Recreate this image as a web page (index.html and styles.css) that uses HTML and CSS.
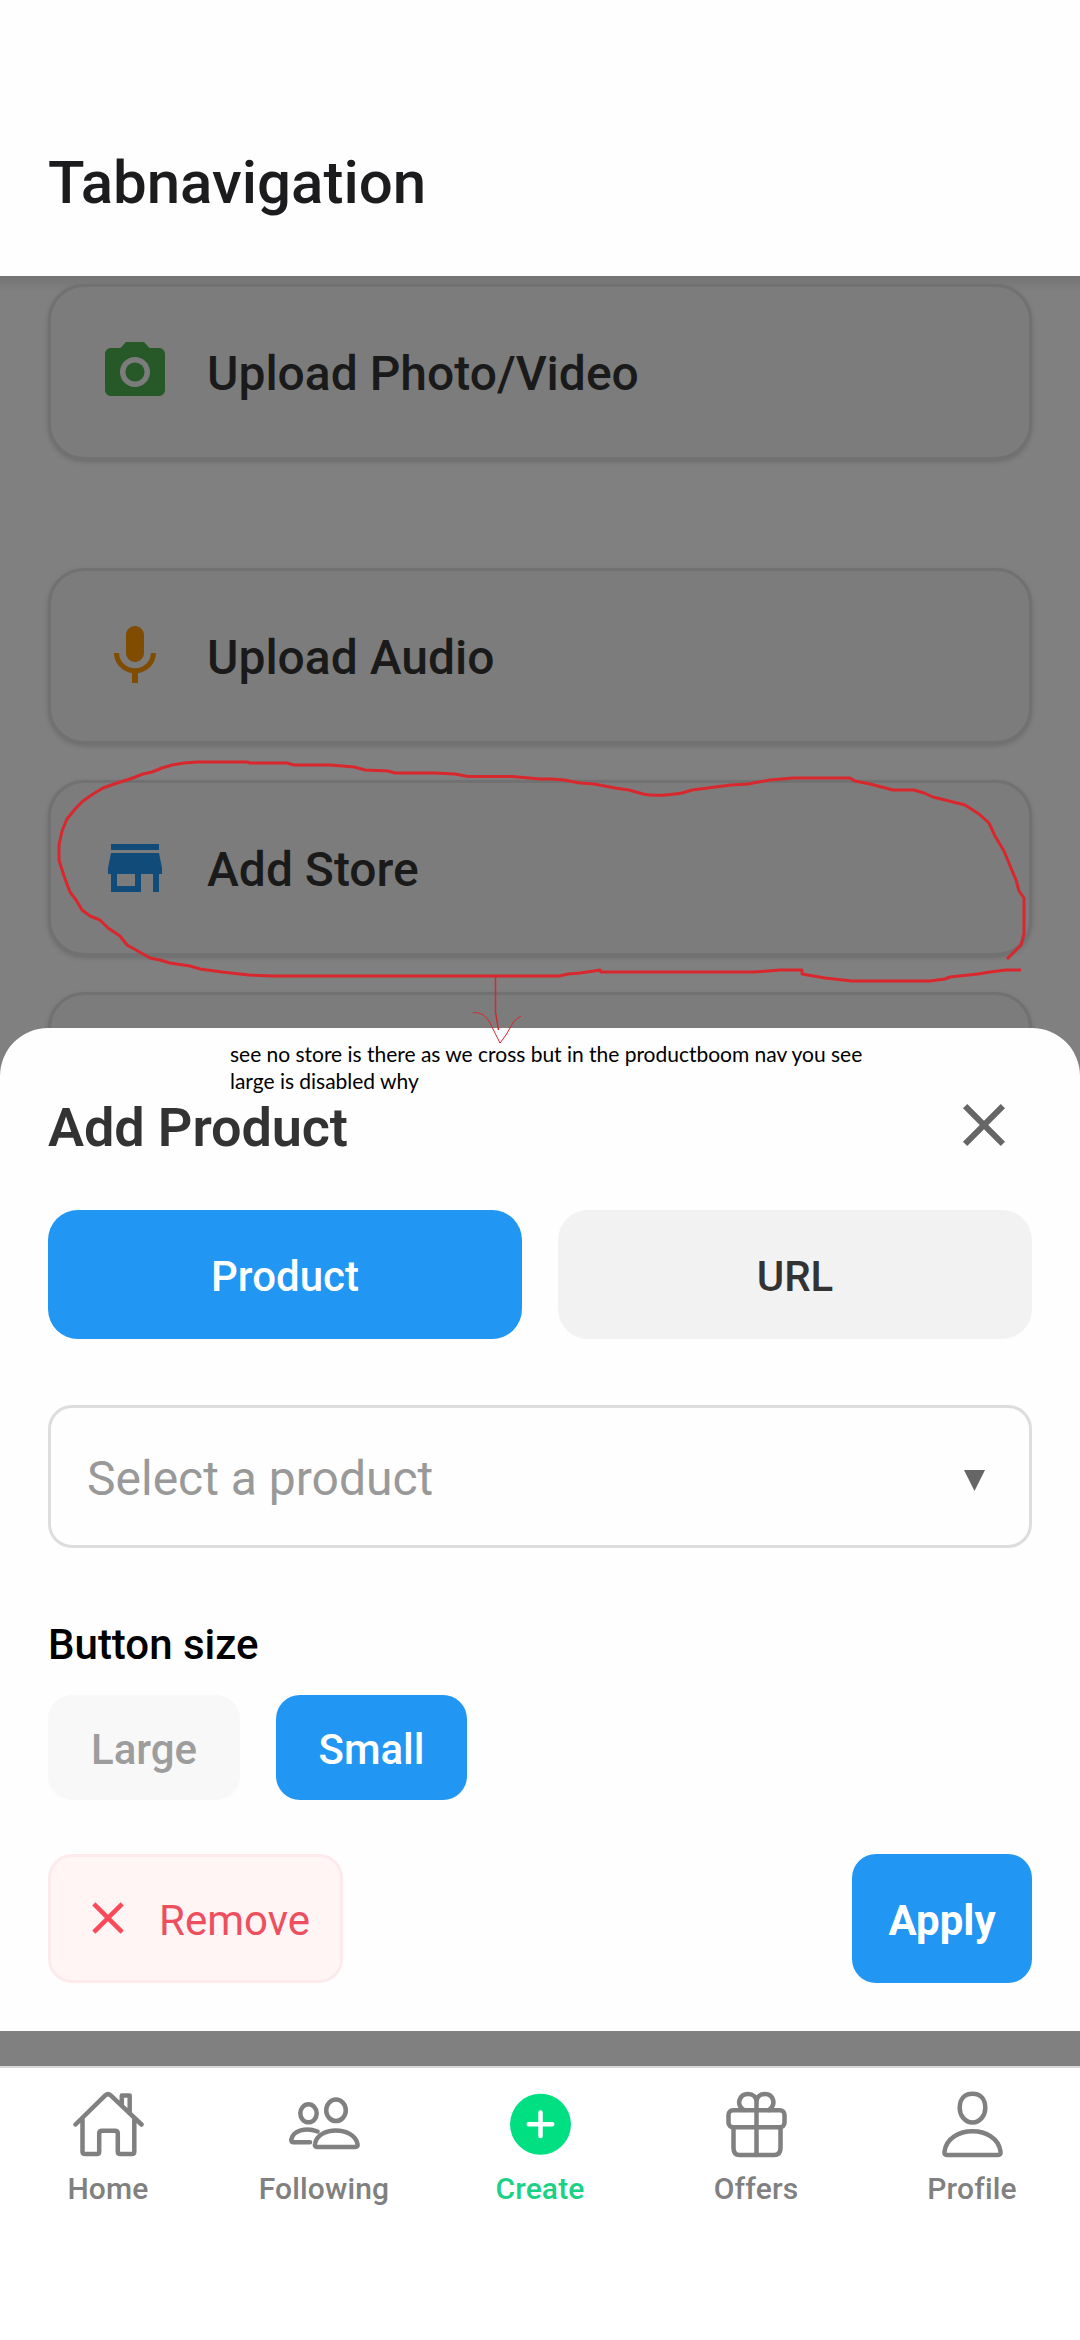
FILE: index.html
```html
<!DOCTYPE html>
<html lang="en">
<head>
<meta charset="utf-8">
<title>Tabnavigation</title>
<link rel="stylesheet" href="styles.css">
</head>
<body>
<div class="screen">
  <header class="header"><h1 class="header-title">Tabnavigation</h1></header>

  <main class="content">
    <div class="options">
      <div class="card card-first">
        <svg class="icon" viewBox="0 0 24 24" fill="#265828"><circle cx="12" cy="12" r="3.2"/><path d="M9 2L7.17 4H4c-1.1 0-2 .9-2 2v12c0 1.1.9 2 2 2h16c1.1 0 2-.9 2-2V6c0-1.1-.9-2-2-2h-3.17L15 2H9zm3 15c-2.76 0-5-2.24-5-5s2.24-5 5-5 5 2.24 5 5-2.24 5-5 5z"/></svg>
        <span>Upload Photo/Video</span>
      </div>
      <div class="card">
        <svg class="icon" viewBox="0 0 24 24" fill="#804c00"><path d="M12 14c1.66 0 2.99-1.34 2.99-3L15 5c0-1.66-1.34-3-3-3S9 3.34 9 5v6c0 1.66 1.34 3 3 3zm5.3-3c0 3-2.54 5.1-5.3 5.1S6.7 14 6.7 11H5c0 3.41 2.72 6.23 6 6.72V21h2v-3.28c3.28-.48 6-3.3 6-6.72h-1.7z"/></svg>
        <span>Upload Audio</span>
      </div>
      <div class="card">
        <svg class="icon" viewBox="0 0 24 24" fill="#114b7a"><path d="M20 4H4v2h16V4zm1 10v-2l-1-5H4l-1 5v2h1v6h10v-6h4v6h2v-6h1zm-9 4H6v-4h6v4z"/></svg>
        <span>Add Store</span>
      </div>
      <div class="card"></div>
    </div>

    <section class="sheet">
      <div class="sheet-head">
        <h2 class="sheet-title">Add Product</h2>
        <svg class="icon" viewBox="0 0 24 24" fill="#666"><path d="M19 6.41L17.59 5 12 10.59 6.41 5 5 6.41 10.59 12 5 17.59 6.41 19 12 13.41 17.59 19 19 17.59 13.41 12z"/></svg>
      </div>
      <div class="tabs">
        <button class="tab tab-active">Product</button>
        <button class="tab">URL</button>
      </div>
      <div class="select">
        <span>Select a product</span>
        <svg class="caret" viewBox="0 0 21 21" fill="#666"><path d="M0 0h21L10.500 21z"/></svg>
      </div>
      <h3 class="size-title">Button size</h3>
      <div class="sizes">
        <button class="size size-disabled">Large</button>
        <button class="size size-active">Small</button>
      </div>
      <div class="actions">
        <button class="remove">
          <svg class="remove-icon" viewBox="0 0 24 24" fill="#fa4a5a"><path d="M19 6.41L17.59 5 12 10.59 6.41 5 5 6.41 10.59 12 5 17.59 6.41 19 12 13.41 17.59 19 19 17.59 13.41 12z"/></svg>
          <span>Remove</span>
        </button>
        <button class="apply">Apply</button>
      </div>
    </section>
  </main>

  <nav class="nav">
    <div class="nav-item">
      <svg class="nav-icon" viewBox="0 0 72 72"><path d="M3.500 34.500 33.500 5.200Q36 3 38.500 5.200L69.500 34.500M10.500 29V61.500Q10.500 64 13 64H25Q27.200 64 27.200 61.500V43.500Q27.200 40.800 30 40.800H43Q45.800 40.800 45.800 43.500V61.500Q45.800 64 48 64H60Q62.300 64 62.300 61.500V28M49.800 15V5.500H57.700V23"/></svg>
      <span>Home</span>
    </div>
    <div class="nav-item">
      <svg class="nav-icon" viewBox="0 0 72 72"><ellipse cx="20.500" cy="23.300" rx="8.200" ry="9"/><ellipse cx="48" cy="20.300" rx="9.800" ry="10.700"/><path d="M29.500 41.500C18 37 5 40.500 3.300 49.500Q3 52.300 5.500 52.300H22M29 57Q26.500 57 27 54C29.500 36 66 36 69.500 54Q70 57 67.500 57Z"/></svg>
      <span>Following</span>
    </div>
    <div class="nav-item nav-current">
      <svg class="nav-icon" viewBox="0 0 72 72"><circle cx="36.500" cy="34.300" r="30.500" fill="#00df82" stroke="none"/><path stroke="#fff" d="M36.500 22.500V46.100M24.700 34.300H48.300"/></svg>
      <span>Create</span>
    </div>
    <div class="nav-item">
      <svg class="nav-icon" viewBox="0 0 72 72"><rect x="8.500" y="20.300" width="56" height="17" rx="4.500"/><path d="M13.500 37.300V58Q13.500 65 19.500 65H54Q60.500 65 60.500 58V37.300M36.500 20V65M24 20C15 14 20 4 28 4C33 4 36.500 7 36.500 12V20V12C36.500 7 40 4 45 4C53 4 57 14 49 20"/></svg>
      <span>Offers</span>
    </div>
    <div class="nav-item">
      <svg class="nav-icon" viewBox="0 0 72 72"><path d="M36.500 3.800C28.500 3.800 23.700 9 23.700 18C23.700 25.500 29 32.500 36.500 32.500S49.300 25.500 49.300 18C49.300 9 44.500 3.800 36.500 3.800ZM11 65Q8 65 8.500 61.500C12 34.500 61 34.500 64.500 61.500Q65 65 62 65Z"/></svg>
      <span>Profile</span>
    </div>
  </nav>

  <svg class="ink" viewBox="0 0 1080 2340">
    <path class="ink-thick" d="M540 779L512 776.500H468L455 774 434 773H395L388 771 365 770 354 767 330 765H294L287 763H250L247 762H198L184 763 172 765 162 768 152 772 143 774 130 779 117 783 103 788 93 794 83 801 76 808 67 819 62 831 59 845V860L64 876 70 892 76 900 82 910 90 916 100 920 108 928 120 936 127 945 136 950 150 958 160 960 170 963 190 966 200 969 222 972 249 975 272 976H559L568 974 580 973 594 971 600 970 601 972H754L780 970H802V974L825 978 852 981H930L945 979 950 977 978 974 990 972 1006 970H1021"/>
    <path class="ink-thick" d="M540 779H552L564 780 580 783 594 784 615 788 629 790 643 794Q656 797 682 793L692 790 731 785 748 784 770 780 793 778H850L855 781 870 784 893 790H914L924 793 933 797 965 805 979 814 989 823 995 836 1004 851 1011 868 1016 880 1019 891 1024 898V934L1021 945 1013 953 1007 959"/>
    <path class="ink-thin" d="M495.500 976V1012L498.500 1030"/>
    <path class="ink-hair" d="M473 1012.500Q485 1012 490 1023L500 1043 506 1035 514 1021 521 1016"/>
  </svg>
  <p class="note">see no store is there as we cross but in the productboom nav you see<br>large is disabled why</p>
</div>
</body>
</html>
```

FILE: styles.css
```css
* { box-sizing: border-box; }

body {
  margin: 0;
  font-family: Roboto, sans-serif;
}

.screen {
  position: relative;
  display: flex;
  flex-direction: column;
  width: 1080px;
  height: 2340px;
  overflow: hidden;
  background: #fefefe;
}

h1, h2, h3, p { margin: 0; }

button {
  border: 0;
  font: inherit;
}

.header {
  height: 276px;
  padding: 148px 48px 0;
  background: #fefefe;
}

.header-title {
  font-size: 60px;
  font-weight: 500;
  line-height: 70px;
  color: #1c1c1e;
}

.content {
  display: flex;
  flex-direction: column;
  height: 1790px;
  padding-bottom: 35px;
  background: linear-gradient(#747474, #808080 16px, #808080);
}

.options {
  display: flex;
  flex-direction: column;
  gap: 36px;
  height: 752px;
  padding: 8px 48px 0;
}

.card {
  display: flex;
  flex: none;
  align-items: flex-start;
  gap: 36px;
  height: 176px;
  padding: 49px 48px;
  border: 3px solid #717171;
  border-radius: 36px;
  background: #7c7c7c;
  box-shadow: 0 2px 5px rgba(0, 0, 0, 0.16);
  font-size: 48px;
  font-weight: 500;
  line-height: 56px;
  color: #1a1a1a;
}

.card:last-child {
  height: 84px;
  border-bottom: 0;
  border-radius: 36px 36px 0 0;
}

.card span { padding-top: 10px; }

.card-first { margin-bottom: 72px; }

.icon {
  flex: none;
  width: 72px;
  height: 72px;
}

.sheet {
  position: relative;
  height: 1003px;
  padding: 61px 48px 0;
  border-radius: 48px 48px 0 0;
  background: #fefefe;
}

.sheet-head {
  display: flex;
  justify-content: space-between;
  height: 121px;
  padding-right: 12px;
}

.sheet-title {
  padding-top: 7px;
  font-size: 54px;
  font-weight: 600;
  line-height: 64px;
  letter-spacing: -0.1px;
  color: #333;
}

.tabs {
  display: flex;
  gap: 36px;
}

.tab {
  flex: 1;
  height: 129px;
  padding: 4px 0 0;
  border-radius: 30px;
  background: #f2f2f2;
  font-size: 42px;
  font-weight: 500;
  color: #333;
}

.tab-active {
  background: #2196f3;
  color: #fff;
}

.select {
  display: flex;
  align-items: center;
  justify-content: space-between;
  height: 143px;
  margin-top: 66px;
  padding: 4px 44px 0 36px;
  border: 3px solid #ddd;
  border-radius: 24px;
  font-size: 48px;
  color: #999;
}

.caret {
  width: 21px;
  height: 21px;
  margin-top: 4px;
}

.size-title {
  margin-top: 72px;
  font-size: 42px;
  font-weight: 500;
  line-height: 50px;
  color: #000;
}

.sizes {
  display: flex;
  gap: 36px;
  margin-top: 25px;
}

.size {
  height: 105px;
  padding: 3px 0 0;
  border-radius: 24px;
  font-size: 42px;
  font-weight: 500;
}

.size-disabled {
  width: 192px;
  background: #f8f8f8;
  color: #9d9d9d;
}

.size-active {
  width: 191px;
  background: #2196f3;
  color: #fff;
}

.actions {
  display: flex;
  justify-content: space-between;
  margin-top: 54px;
}

.remove {
  display: flex;
  align-items: center;
  gap: 24px;
  width: 295px;
  height: 129px;
  padding: 0 30px;
  border: 3px solid #fdeaec;
  border-radius: 24px;
  background: #fff5f5;
  font-size: 42px;
  color: #ee4f5f;
}

.remove span { padding-top: 4px; }

.remove-icon {
  flex: none;
  width: 54px;
  height: 54px;
  margin-bottom: 1px;
}

.apply {
  width: 180px;
  height: 129px;
  padding: 4px 0 0;
  border-radius: 24px;
  background: #2196f3;
  font-size: 42px;
  font-weight: 700;
  color: #fff;
}

.nav {
  display: grid;
  grid-template-columns: repeat(5, 1fr);
  height: 274px;
  padding-top: 22px;
  border-top: 2px solid #d8d8d8;
  background: #fff;
}

.nav-item {
  display: flex;
  flex-direction: column;
  align-items: center;
  font-size: 30px;
  font-weight: 500;
  line-height: 36px;
  letter-spacing: 0.15px;
  color: #808080;
}

.nav-item span { margin-top: 9px; }

.nav-current { color: #1bd186; }

.nav-icon {
  width: 72px;
  height: 72px;
  fill: none;
  stroke: #808080;
  stroke-width: 4.500;
  stroke-linecap: round;
  stroke-linejoin: round;
}

/* Hand-drawn annotation laid over the screen */
.ink {
  position: absolute;
  inset: 0;
  width: 1080px;
  height: 2340px;
  fill: none;
  stroke: #d9272e;
  stroke-linejoin: round;
}

.ink-thick { stroke-width: 3; }
.ink-thin { stroke-width: 1.500; }
.ink-hair { stroke-width: 1; }

.note {
  position: absolute;
  top: 1040px;
  left: 230px;
  font-family: Lato, sans-serif;
  font-size: 21px;
  line-height: 27px;
  letter-spacing: -0.02px;
  white-space: nowrap;
  color: #000;
}
```
